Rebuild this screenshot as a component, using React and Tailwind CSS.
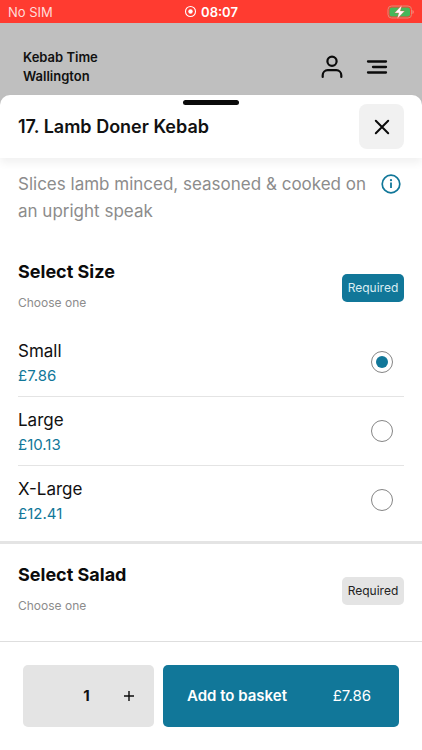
import React, { useState } from "react";

const sizes = [
  { id: "small", name: "Small", price: "£7.86" },
  { id: "large", name: "Large", price: "£10.13" },
  { id: "x-large", name: "X-Large", price: "£12.41" },
];

function StatusBar() {
  return (
    <div className="grid h-[23px] grid-cols-3 items-center bg-[#ff3b30] px-2 text-[13px] leading-4 text-white">
      <span className="text-[#ffdcd9]">No SIM</span>
      <span className="flex items-center justify-center gap-1 font-semibold">
        <svg className="size-[13px]" viewBox="0 0 13 13" fill="none" aria-hidden="true">
          <circle cx="6.5" cy="6.5" r="5" stroke="currentColor" strokeWidth="1.1" />
          <circle cx="6.5" cy="6.5" r="2.2" fill="currentColor" />
        </svg>
        08:07
      </span>
      <svg className="h-[14px] w-[27px] justify-self-end" viewBox="0 0 27 14" aria-hidden="true">
        <rect x="1" y="1" width="23.5" height="12" rx="3.5" fill="none" stroke="#e08a72" strokeWidth="1" />
        <rect x="2.5" y="2.5" width="20.5" height="9" rx="2" fill="#46b75a" />
        <path d="M25.5 5v4c.8-.3 1.2-1.1 1.2-2s-.4-1.7-1.2-2z" fill="#ff8a80" />
        <path d="M14.8.3 7.6 7.9h4.2L10.2 13.700l7.400-7.700h-4.300z" fill="#fff" stroke="#ff3b30" strokeWidth=".3" />
      </svg>
    </div>
  );
}

function SectionHead({ title, active }) {
  return (
    <div className="flex items-center justify-between">
      <div>
        <h2 className="text-[18px] font-bold leading-[28px] text-[#0b0b0b]">{title}</h2>
        <p className="mt-[7px] text-[12px] leading-5 text-[#8c8c8c]">Choose one</p>
      </div>
      <span
        className={
          "mt-1 flex h-7 w-[62px] items-center justify-center rounded-[5px] text-[12px] " +
          (active ? "bg-[#117799] text-[#d9edf3]" : "bg-[#e4e4e4] text-[#222]")
        }
      >
        Required
      </span>
    </div>
  );
}

export default function App() {
  const [size, setSize] = useState("small");

  return (
    <div className="flex min-h-screen flex-col bg-[#bfbfbf] font-['Inter','Liberation_Sans',sans-serif] text-[#111]">
      <StatusBar />

      <header className="flex h-[72px] items-center justify-between pl-[23px] pr-[34px] pt-4">
        <p className="text-[13px] font-semibold leading-[19px]">
          Kebab Time
          <br />
          Wallington
        </p>
        <div className="flex items-center gap-[22px]">
          <button type="button" aria-label="Account">
            <svg className="size-6" viewBox="0 0 24 24" fill="none" stroke="#0b0b0b" strokeWidth="2.2" strokeLinecap="round" aria-hidden="true">
              <circle cx="12" cy="6.2" r="4.600" />
              <path d="M2.700 22v-1.800a5 5 0 0 1 5-5h8.600a5 5 0 0 1 5 5V22" />
            </svg>
          </button>
          <button type="button" aria-label="Menu">
            <svg className="h-4 w-[22px]" viewBox="0 0 22 16" fill="none" stroke="#0b0b0b" strokeWidth="2.300" strokeLinecap="round" aria-hidden="true">
              <path d="M2 2.500h18M7 8h13M2 13.500h18" />
            </svg>
          </button>
        </div>
      </header>

      <main className="relative flex flex-1 flex-col rounded-t-[10px] bg-white">
        <span className="absolute left-1/2 top-[5px] h-[5px] w-14 -translate-x-1/2 rounded-full bg-[#0b0b0b]" />

        <div className="flex h-[63px] items-center justify-between rounded-t-[10px] px-[18px] shadow-[0_5px_8px_rgba(0,0,0,0.06)]">
          <h1 className="text-[18px] font-semibold leading-6">17. Lamb Doner Kebab</h1>
          <button type="button" aria-label="Close" className="flex size-[45px] items-center justify-center rounded-[8px] bg-[#f1f1f1]">
            <svg className="size-4" viewBox="0 0 16 16" fill="none" stroke="#0b0b0b" strokeWidth="2" strokeLinecap="round" aria-hidden="true">
              <path d="m1.800 1.800 12.400 12.400M14.200 1.800 1.800 14.200" />
            </svg>
          </button>
        </div>

        <div className="flex items-start justify-between px-[18px] pt-[13px]">
          <p className="w-[356px] text-[17px] leading-[27px] text-[#8c8c8c]">
            Slices lamb minced, seasoned &amp; cooked on an upright speak
          </p>
          <button type="button" aria-label="Product information" className="mr-[3px] mt-[3px] shrink-0">
            <svg className="size-5" viewBox="0 0 20 20" fill="none" stroke="#117799" aria-hidden="true">
              <circle cx="10" cy="10" r="8.800" strokeWidth="1.700" />
              <path d="M10 8.600v5.400" strokeWidth="1.800" />
              <circle cx="10" cy="6.200" r="1.100" fill="#117799" stroke="none" />
            </svg>
          </button>
        </div>

        <section className="border-b-3 border-[#e4e4e4] px-[18px] pb-[7px] pt-[33px]">
          <SectionHead title="Select Size" active />
          <div className="mt-[15px]" role="radiogroup" aria-label="Select Size">
            {sizes.map((s) => (
              <label
                key={s.id}
                htmlFor={s.id}
                className="flex items-center justify-between border-b border-[#e4e4e4] pb-2 pr-[11px] pt-[10px] last:border-b-0"
              >
                <span>
                  <span className="block text-[17px] leading-[26px]">{s.name}</span>
                  <span className="block text-[15px] leading-6 text-[#117799]">{s.price}</span>
                </span>
                <input
                  type="radio"
                  id={s.id}
                  name="size"
                  checked={size === s.id}
                  onChange={() => setSize(s.id)}
                  className="mb-0.5 flex size-[22px] appearance-none items-center justify-center rounded-full border border-[#858585] bg-white before:size-3 before:rounded-full checked:before:bg-[#117799]"
                />
              </label>
            ))}
          </div>
        </section>

        <section className="flex-1 px-[18px] pb-6 pt-[17px]">
          <SectionHead title="Select Salad" />
        </section>

        <footer className="flex gap-[9px] border-t border-[#dedede] px-[23px] pb-[23px] pt-[23px]">
          <div className="grid h-[62px] w-[131px] grid-cols-3 items-center rounded-[5px] bg-[#e4e4e4] pr-1">
            <output className="col-start-2 text-center text-[15px] font-bold">1</output>
            <button type="button" aria-label="Increase quantity" className="flex justify-center">
              <svg className="size-3" viewBox="0 0 12 12" fill="none" stroke="#0b0b0b" strokeWidth="1.400" aria-hidden="true">
                <path d="M6 1v10M1 6h10" />
              </svg>
            </button>
          </div>
          <button type="button" className="flex h-[62px] flex-1 items-center justify-between rounded-[5px] bg-[#117799] pl-6 pr-7 text-[15px] text-white">
            <span className="font-semibold">Add to basket</span>
            <span>£7.86</span>
          </button>
        </footer>
      </main>
    </div>
  );
}
